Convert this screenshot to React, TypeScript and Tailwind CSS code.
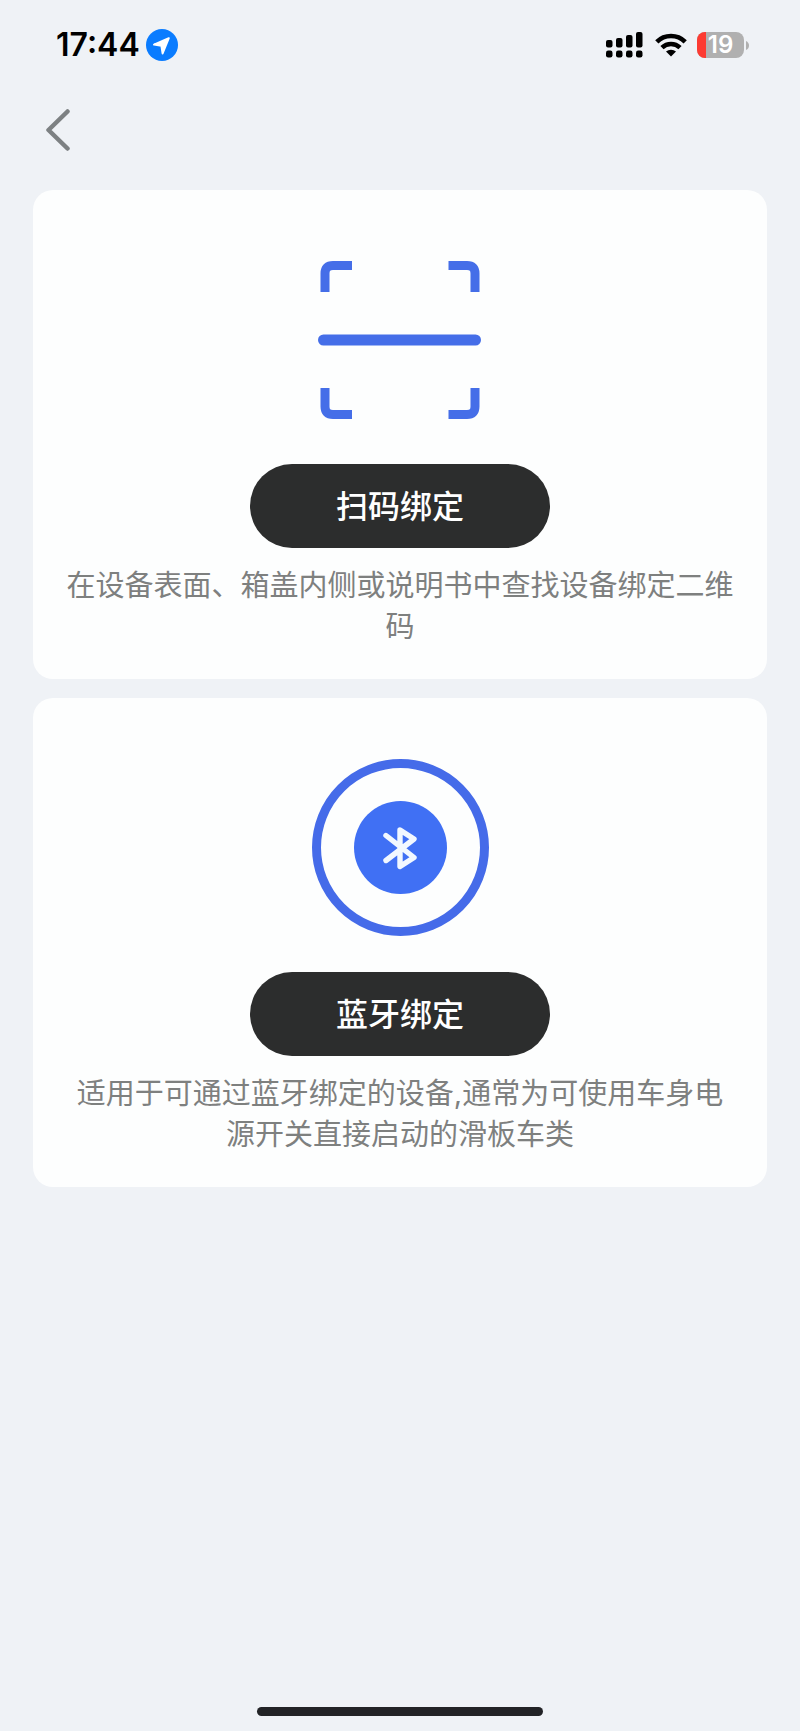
import React from "react";

function SignalIcon() {
  const bars = [
    {x: 0, y: 8},
    {x: 10, y: 6},
    {x: 20, y: 3},
    {x: 30, y: 0},
  ];
  return (
    <svg width="37" height="26" viewBox="0 0 37 26" aria-hidden="true">
      {bars.map((bar) => (
        <g key={bar.x}>
          <rect x={bar.x} y={bar.y} width="6.5" height={15.5 - bar.y} rx="2" />
          <rect x={bar.x} y="18.5" width="6.5" height="7" rx="2.2" />
        </g>
      ))}
    </svg>
  );
}

function WifiIcon() {
  return (
    <svg width="32" height="24" viewBox="0 0 32 24" fill="none" stroke="#000" strokeWidth="4.6" aria-hidden="true">
      <path d="M1.8 8.8a20.3 20.3 0 0 1 28.4 0" />
      <path d="M7 14.6a13 13 0 0 1 18 0" />
      <path d="M16 23.6l-5-5a7.4 7.4 0 0 1 10 0z" fill="#000" stroke="none" />
    </svg>
  );
}

function Battery({level}: {level: number}) {
  return (
    <div className="flex items-center gap-0.5">
      <div className="relative flex h-[26px] w-[47px] items-center justify-center rounded-lg bg-[#b0b0b0]">
        <div className="absolute inset-y-0 left-0 rounded-l-lg bg-[#fc3b32]" style={{width: `${level}%`}} />
        <span className="relative text-[24px] leading-[30px] font-semibold text-white">{level}</span>
      </div>
      <svg width="3" height="9" viewBox="0 0 3 9" fill="#b0b0b0" aria-hidden="true">
        <path d="M0 0q3 1.5 3 4.5T0 9z" />
      </svg>
    </div>
  );
}

function StatusBar() {
  return (
    <div className="flex h-8 items-center justify-between pr-[51px] pl-14">
      <div className="flex items-center gap-1.5">
        <span className="text-[32px] leading-8 font-semibold text-black">17:44</span>
        <svg width="32" height="32" viewBox="0 0 32 32" aria-hidden="true">
          <circle cx="16" cy="16" r="16" fill="#0a7cff" />
          <path
            d="M22.8 9.2L8 15.6l7.4 1.2 1.2 7.6z"
            fill="#fff"
            stroke="#fff"
            strokeWidth="2"
            strokeLinejoin="round"
          />
        </svg>
      </div>
      <div className="flex items-center">
        <SignalIcon />
        <div className="ml-3">
          <WifiIcon />
        </div>
        <div className="ml-2.5">
          <Battery level={19} />
        </div>
      </div>
    </div>
  );
}

function ScanIcon() {
  return (
    <svg width="177" height="177" viewBox="0 0 177 177" fill="none" stroke="#456ee8" strokeWidth="9" aria-hidden="true">
      <path d="M13 41V22.5q0-8 8-8H40" />
      <path d="M136.5 14.5H155q8 0 8 8V41" />
      <path d="M13 137v18.500q0 8 8 8H40" />
      <path d="M136.5 163.5H155q8 0 8-8V137" />
      <path d="M11.5 89h152" strokeWidth="11" strokeLinecap="round" />
    </svg>
  );
}

function BluetoothIcon() {
  return (
    <svg width="177" height="177" viewBox="0 0 177 177" fill="none" aria-hidden="true">
      <circle cx="88.5" cy="88.5" r="84" stroke="#456be9" strokeWidth="9" />
      <circle cx="88.5" cy="88.5" r="46.5" fill="#4070f4" />
      <path
        d="M74 76.500L102 98.500 88 107.500V71L102 80 74 101.500"
        stroke="#f2f8ff"
        strokeWidth="5.4"
        strokeLinecap="round"
        strokeLinejoin="round"
      />
    </svg>
  );
}

function BindCard({icon, label, children}: {icon: React.ReactNode; label: string; children: React.ReactNode}) {
  return (
    <section className="flex flex-col items-center rounded-[20px] bg-[#fdfefe] px-8 pt-[61px] pb-8">
      {icon}
      <button
        type="button"
        className="mt-9 h-[84px] w-[300px] cursor-pointer rounded-full bg-[#2c2d2d] pt-0.5 text-[32px] leading-10 font-medium text-white"
      >
        {label}
      </button>
      <p className="mt-[17px] text-center text-[29px] leading-[41px] font-normal text-[#7e807f]">{children}</p>
    </section>
  );
}

export default function App() {
  return (
    <div
      lang="zh-CN"
      className="flex min-h-screen flex-col bg-[#eff2f6] pt-[29px] pb-[15px] font-['Inter','Noto_Sans_CJK_SC',sans-serif]"
    >
      <StatusBar />
      <header className="flex h-[129px] items-center px-11 pt-[9px]">
        <button type="button" aria-label="返回" className="cursor-pointer">
          <svg width="28" height="42" viewBox="0 0 28 42" fill="none" aria-hidden="true">
            <path
              d="M23.500 2.500L4.500 21l19 18.500"
              stroke="#7d8183"
              strokeWidth="4.500"
              strokeLinecap="round"
              strokeLinejoin="round"
            />
          </svg>
        </button>
      </header>
      <main className="flex flex-col gap-[19px] px-[33px]">
        <BindCard icon={<ScanIcon />} label="扫码绑定">
          在设备表面、箱盖内侧或说明书中查找设备绑定二维码
        </BindCard>
        <BindCard icon={<BluetoothIcon />} label="蓝牙绑定">
          适用于可通过蓝牙绑定的设备,通常为可使用车身电源开关直接启动的滑板车类
        </BindCard>
      </main>
      <div className="mx-auto mt-auto h-[9px] w-[286px] rounded-full bg-[#222326]" />
    </div>
  );
}
